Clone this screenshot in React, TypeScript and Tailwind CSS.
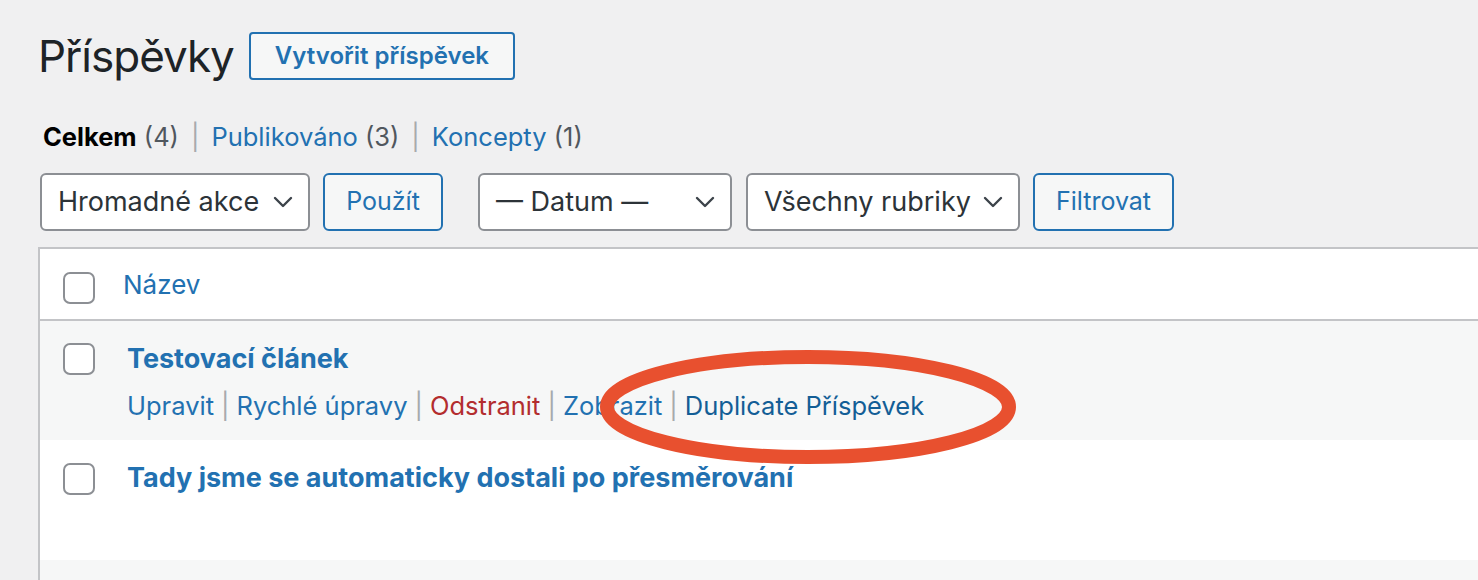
import React from 'react';

const font = { fontFamily: 'Inter, "Noto Sans", sans-serif' };

const Chevron = () => (
  <svg width="20" height="12" viewBox="0 0 20 12" fill="none" className="shrink-0">
    <path d="M2 2 L10 10 L18 2" stroke="#3c434a" strokeWidth="2.4" strokeLinecap="round" strokeLinejoin="round" />
  </svg>
);

const Select: React.FC<{ label: string; width: string }> = ({ label, width }) => (
  <div
    className={`${width} h-[58px] bg-white border-2 border-[#8c8f94] rounded-[6px] flex items-center justify-between pl-[16px] pr-[15px] text-[27px] text-[#2c3338]`}
  >
    <span className="whitespace-nowrap">{label}</span>
    <Chevron />
  </div>
);

const Button: React.FC<{ label: string; width: string }> = ({ label, width }) => (
  <div
    className={`${width} h-[58px] bg-[#f6f7f7] border-2 border-[#2271b1] rounded-[6px] flex items-center justify-center text-[25px] text-[#2271b1]`}
  >
    {label}
  </div>
);

const Checkbox = () => (
  <div className="w-[32px] h-[32px] rounded-[7px] border-2 border-[#8c8f94] bg-white" />
);

const Sep = () => <span className="text-[#a7aaad] mx-[12px]">|</span>;
const ActionSep = () => <span className="text-[#a7aaad] mx-[7px]">|</span>;

export default function App() {
  return (
    <div className="relative min-h-screen bg-[#f0f0f1] overflow-hidden pl-[38px]" style={font}>
      {/* Title */}
      <div className="flex items-center gap-[15px] pt-[28px]">
        <h1 className="text-[44px] leading-[56px] text-[#1d2327] tracking-[-1px]">Příspěvky</h1>
        <div className="h-[48px] px-[24px] border-2 border-[#2271b1] rounded-[4px] bg-[#f6f7f7] flex items-center text-[24px] font-semibold text-[#2271b1]">
          Vytvořit příspěvek
        </div>
      </div>

      {/* Views */}
      <div className="mt-[35px] pl-[5px] text-[25.5px] leading-[36px] text-[#50575e] whitespace-nowrap">
        <span className="font-bold text-black">Celkem</span> (4)
        <Sep />
        <span className="text-[#2271b1]">Publikováno</span> (3)
        <Sep />
        <span className="text-[#2271b1]">Koncepty</span> (1)
      </div>

      {/* Filters */}
      <div className="flex items-center mt-[18px] pl-[2px]">
        <Select label="Hromadné akce" width="w-[270px]" />
        <div className="w-[13px]" />
        <Button label="Použít" width="w-[120px]" />
        <div className="w-[35px]" />
        <Select label="— Datum —" width="w-[254px]" />
        <div className="w-[14px]" />
        <Select label="Všechny rubriky" width="w-[274px]" />
        <div className="w-[13px]" />
        <Button label="Filtrovat" width="w-[141px]" />
      </div>

      {/* Table */}
      <div className="mt-[16px] -mr-[20px] border-l-2 border-t-2 border-[#c3c4c7] bg-white">
        <div className="flex h-[72px] border-b-2 border-[#c3c4c7]">
          <div className="w-[83px] pl-[23px] pt-[23px]">
            <Checkbox />
          </div>
          <div className="pt-[18px] text-[26px] leading-[36px] text-[#2271b1]">Název</div>
        </div>

        <div className="flex h-[119px] bg-[#f6f7f7]">
          <div className="w-[87px] pl-[23px] pt-[22px]">
            <Checkbox />
          </div>
          <div className="pt-[18px]">
            <div className="text-[27px] leading-[40px] font-bold text-[#2271b1]">Testovací článek</div>
            <div className="mt-[7px] text-[25.5px] leading-[40px] text-[#2271b1] whitespace-nowrap">
              Upravit
              <ActionSep />
              Rychlé úpravy
              <ActionSep />
              <span className="text-[#b32d2e]">Odstranit</span>
              <ActionSep />
              Zobrazit
              <ActionSep />
              <span className="text-[#135e96]">Duplicate Příspěvek</span>
            </div>
          </div>
        </div>

        <div className="flex h-[120px] bg-white">
          <div className="w-[87px] pl-[23px] pt-[23px]">
            <Checkbox />
          </div>
          <div className="pt-[18px] text-[27px] leading-[40px] font-bold text-[#2271b1] whitespace-nowrap">
            Tady jsme se automaticky dostali po přesměrování
          </div>
        </div>

        <div className="h-[60px] bg-[#f6f7f7]" />
      </div>

      {/* Highlight ellipse */}
      <svg
        className="absolute left-[594px] top-[345px] pointer-events-none"
        width="430"
        height="126"
        viewBox="0 0 430 126"
      >
        <ellipse cx="214" cy="62" rx="201" ry="50" fill="none" stroke="#e8502f" strokeWidth="14" />
      </svg>
    </div>
  );
}
